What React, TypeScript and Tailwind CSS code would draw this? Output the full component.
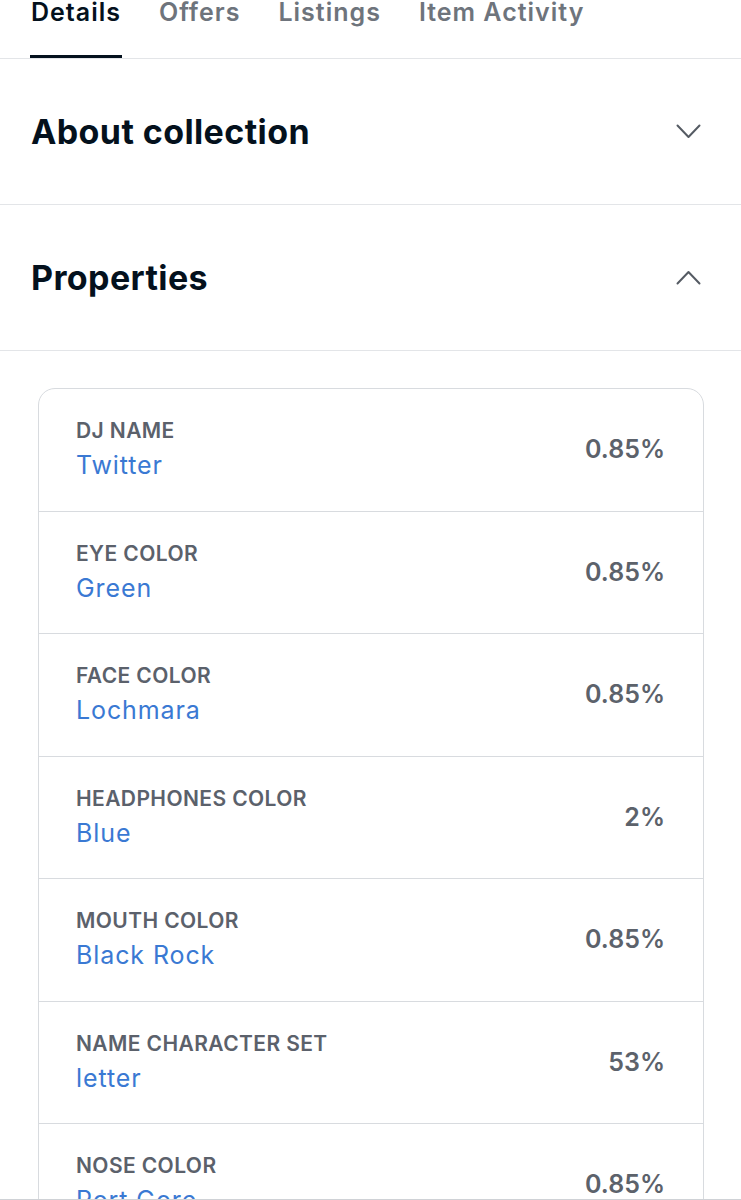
const tabs = ["Details", "Offers", "Listings", "Item Activity"];

const traits = [
  { type: "DJ NAME", value: "Twitter", rarity: "0.85%" },
  { type: "EYE COLOR", value: "Green", rarity: "0.85%" },
  { type: "FACE COLOR", value: "Lochmara", rarity: "0.85%" },
  { type: "HEADPHONES COLOR", value: "Blue", rarity: "2%" },
  { type: "MOUTH COLOR", value: "Black Rock", rarity: "0.85%" },
  { type: "NAME CHARACTER SET", value: "letter", rarity: "53%" },
  { type: "NOSE COLOR", value: "Port Gore", rarity: "0.85%" },
  { type: "SHIRT COLOR", value: "Red", rarity: "0.85%" },
];

function Chevron({ up }: { up?: boolean }) {
  return (
    <svg width="25" height="15" viewBox="0 0 25 15" fill="none" className="shrink-0">
      <polyline
        points={up ? "1.5,13.5 12.5,2 23.5,13.5" : "1.5,1.5 12.5,13 23.5,1.5"}
        stroke="#555b63"
        strokeWidth="2"
        strokeLinecap="round"
        strokeLinejoin="round"
      />
    </svg>
  );
}

function Section({ title, open }: { title: string; open?: boolean }) {
  return (
    <div className="flex h-[146px] items-center justify-between border-b border-[#e3e5e8] pl-[31px] pr-[40px]">
      <h2 className="text-[34px] font-bold leading-[40px] tracking-[0.4px] text-[#04111d]">{title}</h2>
      <Chevron up={open} />
    </div>
  );
}

export default function App() {
  return (
    <div className="relative h-[1200px] overflow-hidden bg-white font-['Inter',sans-serif]">
      <div className="flex h-[59px] gap-[36px] overflow-hidden border-b border-[#e3e5e8] px-[30px]">
        {tabs.map((t, i) => (
          <div key={t} className="flex flex-col justify-between">
            <span
              className={`-mt-[4px] px-[1px] text-[25px] font-semibold leading-[32px] tracking-[1px] ${
                i === 0 ? "text-[#04111d]" : "text-[#6e747c]"
              }`}
            >
              {t}
            </span>
            {i === 0 ? <div className="h-[3px] bg-[#04111d]" /> : <div className="h-[3px]" />}
          </div>
        ))}
      </div>

      <Section title="About collection" />
      <Section title="Properties" open />

      <div className="ml-[38px] mr-[37px] mt-[37px] overflow-hidden rounded-[17px] border border-[#d8dbdf]">
        {traits.map((t) => (
          <div
            key={t.type}
            className="flex h-[122.5px] items-center justify-between border-b border-[#d8dbdf] pl-[37px] pr-[38px]"
          >
            <div className="flex flex-col">
              <span className="text-[21px] font-semibold leading-[26px] tracking-[0.4px] text-[#5b616b]">
                {t.type}
              </span>
              <span className="mt-[5px] text-[25px] leading-[32px] tracking-[0.9px] text-[#3a79d3]">{t.value}</span>
            </div>
            <span className="text-[25px] font-semibold text-[#5c626b]">{t.rarity}</span>
          </div>
        ))}
      </div>

      <div className="absolute bottom-0 left-0 right-0 h-[1px] bg-[#cfd2d6]" />
    </div>
  );
}
